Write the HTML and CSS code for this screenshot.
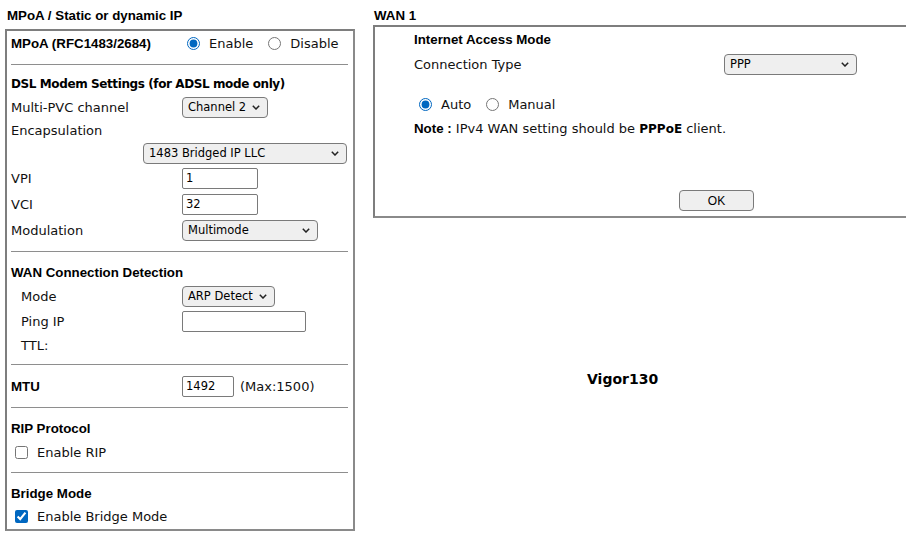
FILE: index.html
```html
<!DOCTYPE html>
<html>
<head>
<meta charset="utf-8">
<link rel="stylesheet" href="styles.css">
</head>
<body>
<div class="page">
  <section class="col-left">
    <h2 class="title">MPoA / Static or dynamic IP</h2>
    <div class="box left-box">
      <div class="row h25">
        <span class="lbl bold">MPoA (RFC1483/2684)</span>
        <span class="ctl">
          <label class="opt"><input type="radio" name="mpoa" checked><span>Enable</span></label>
          <label class="opt"><input type="radio" name="mpoa"><span>Disable</span></label>
        </span>
      </div>
      <hr class="sep">
      <div class="row h22"><span class="sub-title">DSL Modem Settings (for ADSL mode only)</span></div>
      <div class="row">
        <span class="lbl">Multi-PVC channel</span>
        <span class="sel w86"><select><option>Channel 2</option></select><svg class="chev" viewBox="0 0 8 5"><path d="M0.8 0.8 L4 4 L7.2 0.8"/></svg></span>
      </div>
      <div class="row h22"><span class="lbl">Encapsulation</span></div>
      <div class="row end">
        <span class="sel w204"><select><option>1483 Bridged IP LLC</option></select><svg class="chev" viewBox="0 0 8 5"><path d="M0.8 0.8 L4 4 L7.2 0.8"/></svg></span>
      </div>
      <div class="row h26">
        <span class="lbl">VPI</span>
        <input class="txt w76" type="text" value="1">
      </div>
      <div class="row h26">
        <span class="lbl">VCI</span>
        <input class="txt w76" type="text" value="32">
      </div>
      <div class="row h26">
        <span class="lbl">Modulation</span>
        <span class="sel w136"><select><option>Multimode</option></select><svg class="chev" viewBox="0 0 8 5"><path d="M0.8 0.8 L4 4 L7.2 0.8"/></svg></span>
      </div>
      <hr class="sep">
      <div class="row"><span class="lbl bold wide">WAN Connection Detection</span></div>
      <div class="row">
        <span class="lbl indent">Mode</span>
        <span class="sel w93"><select><option>ARP Detect</option></select><svg class="chev" viewBox="0 0 8 5"><path d="M0.8 0.8 L4 4 L7.2 0.8"/></svg></span>
      </div>
      <div class="row h26">
        <span class="lbl indent">Ping IP</span>
        <input class="txt w124" type="text" value="">
      </div>
      <div class="row h22"><span class="lbl indent">TTL:</span></div>
      <hr class="sep">
      <div class="row h26">
        <span class="lbl bold">MTU</span>
        <input class="txt w52" type="text" value="1492">
        <span class="hint">(Max:1500)</span>
      </div>
      <hr class="sep">
      <div class="row"><span class="lbl bold">RIP Protocol</span></div>
      <div class="row">
        <label class="chk"><input type="checkbox"><span>Enable RIP</span></label>
      </div>
      <hr class="sep">
      <div class="row"><span class="lbl bold">Bridge Mode</span></div>
      <div class="row h22">
        <label class="chk"><input type="checkbox" checked><span>Enable Bridge Mode</span></label>
      </div>
    </div>
  </section>

  <section class="col-right">
    <h2 class="title tight">WAN 1</h2>
    <div class="box right-box">
      <div class="row h25"><span class="bold">Internet Access Mode</span></div>
      <div class="row">
        <span class="lbl2">Connection Type</span>
        <span class="sel w133"><select><option>PPP</option></select><svg class="chev" viewBox="0 0 8 5"><path d="M0.8 0.8 L4 4 L7.2 0.8"/></svg></span>
      </div>
      <div class="row gap-top">
        <label class="opt"><input type="radio" name="mode" checked><span>Auto</span></label>
        <label class="opt"><input type="radio" name="mode"><span>Manual</span></label>
      </div>
      <div class="row">
        <p class="note"><span class="bold">Note :</span> IPv4 WAN setting should be <span class="strong">PPPoE</span> client.</p>
      </div>
      <div class="btn-row">
        <button class="btn" type="button">OK</button>
      </div>
    </div>
    <div class="model">Vigor130</div>
  </section>
</div>
</body>
</html>
```

FILE: styles.css
```css
html, body {
  margin: 0;
  padding: 0;
  background: #fff;
}

body {
  font-family: "DejaVu Sans", Verdana, sans-serif;
  font-size: 13px;
  color: #111;
}

.page {
  display: flex;
  align-items: flex-start;
  gap: 18px;
  padding: 8px 0 0 5px;
}

.title {
  margin: 0 0 5px 2px;
  font-family: "Liberation Sans", Arial, sans-serif;
  font-weight: bold;
  font-size: 13.3px;
  line-height: 16px;
  color: #000;
}

.title.tight {
  margin: 0 0 1px 1px;
}

.box {
  box-sizing: border-box;
  border: 2px solid #7e7e7e;
  border-right-color: #8a8a8a;
  border-bottom-color: #8a8a8a;
}

.left-box {
  width: 350px;
  padding: 0 5px 2px 4px;
}

.right-box {
  width: 533px;
  border-right: none;
  padding: 0 0 5px 39px;
}

.row {
  display: flex;
  align-items: center;
  height: 24px;
}

.row.h22 { height: 22px; }
.row.h25 { height: 25px; }
.row.h26 { height: 26px; }
.row.end { justify-content: flex-end; padding-right: 1px; }
.row.gap-top { margin-top: 16px; }

.lbl {
  width: 171px;
  flex: none;
  white-space: nowrap;
}

.lbl.wide { width: auto; }
.lbl.indent { padding-left: 10px; box-sizing: border-box; }

.lbl2 {
  width: 310px;
  flex: none;
}

.bold {
  font-family: "Liberation Sans", Arial, sans-serif;
  font-weight: bold;
  font-size: 13.3px;
  color: #000;
}

.sub-title {
  font-family: "DejaVu Sans", Verdana, sans-serif;
  font-weight: bold;
  font-size: 12px;
  letter-spacing: -0.4px;
  color: #000;
}

.strong {
  font-weight: bold;
  font-size: 12px;
  color: #000;
}

.ctl {
  display: flex;
  align-items: center;
}

.opt {
  display: inline-flex;
  align-items: center;
  margin-right: 10px;
}

.opt input {
  width: 13px;
  height: 13px;
  margin: 0 9px 0 5px;
  accent-color: #0067c0;
}

.chk {
  display: inline-flex;
  align-items: center;
}

.chk input {
  width: 13px;
  height: 13px;
  margin: 0 9px 0 4px;
  accent-color: #0067c0;
}

.sel {
  position: relative;
  display: inline-block;
  height: 21px;
}

.sel select {
  appearance: none;
  -webkit-appearance: none;
  box-sizing: border-box;
  width: 100%;
  height: 21px;
  margin: 0;
  padding: 0 0 0 5px;
  border: 1px solid #7a7a7a;
  border-radius: 4px;
  background: #efefef;
  font-family: "DejaVu Sans", Verdana, sans-serif;
  font-size: 11.5px;
  color: #000;
}

.sel .chev {
  position: absolute;
  right: 8px;
  top: 8px;
  width: 8px;
  height: 5px;
  fill: none;
  stroke: #222;
  stroke-width: 1.5;
  pointer-events: none;
}

.w86 { width: 86px; }
.w204 { width: 204px; }
.w136 { width: 136px; }
.w93 { width: 93px; }
.w133 { width: 133px; }

.txt {
  box-sizing: border-box;
  height: 21px;
  margin: 0;
  padding: 0 0 0 3px;
  border: 1px solid #7a7a7a;
  border-radius: 2px;
  background: #fff;
  font-family: "DejaVu Sans", Verdana, sans-serif;
  font-size: 11.5px;
  color: #000;
}

.w76 { width: 76px; }
.w124 { width: 124px; }
.w52 { width: 52px; }

.hint {
  margin-left: 6px;
}

.sep {
  margin: 8px 0;
  border: none;
  height: 1px;
  background: #8e8e8e;
}

.note {
  margin: 0;
  white-space: nowrap;
}

.btn-row {
  display: flex;
  margin-top: 50px;
  padding-left: 265px;
}

.btn {
  box-sizing: border-box;
  width: 75px;
  height: 21px;
  border: 1px solid #7a7a7a;
  border-radius: 4px;
  background: #efefef;
  font-family: "Liberation Sans", Arial, sans-serif;
  font-size: 12px;
  color: #000;
  padding: 0;
}

.model {
  padding: 153px 0 0 214px;
  font-family: "DejaVu Sans", Verdana, sans-serif;
  font-weight: bold;
  font-size: 14px;
  line-height: 16px;
  color: #000;
}
```
